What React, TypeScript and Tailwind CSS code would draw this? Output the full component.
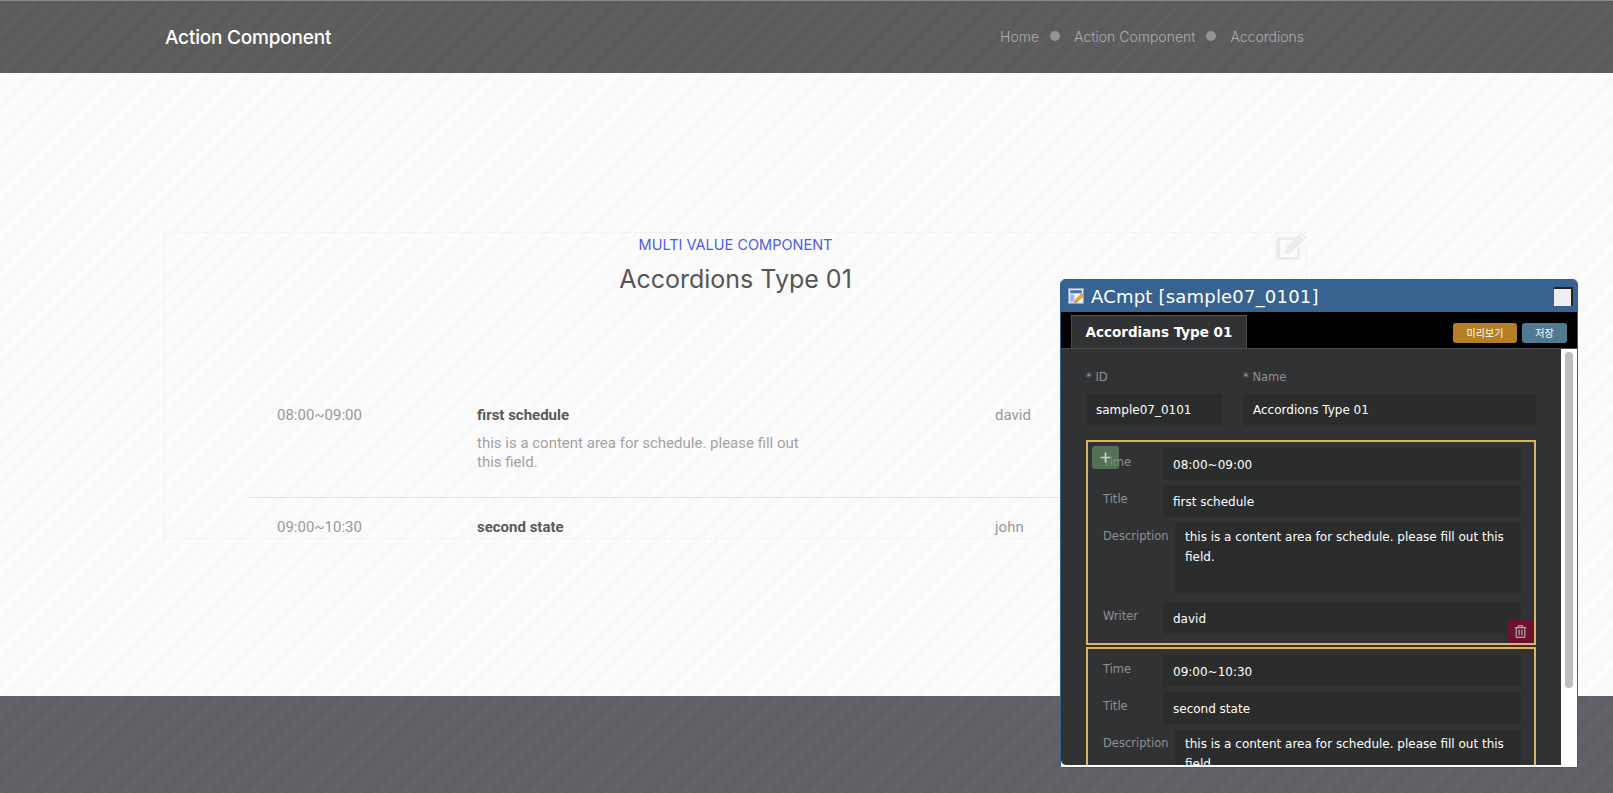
import { Plus } from "lucide-react";
import { FaRegTrashAlt } from "react-icons/fa";

const poppins = "font-['Inter','Liberation_Sans',sans-serif]";
const dialogFont = "font-['DejaVu_Sans','Noto_Sans_CJK_KR',sans-serif]";

const Field = ({ label, value }: { label: string; value: string }) => (
  <div className="flex items-start">
    <label className="w-[60px] shrink-0 box-content pt-[5px] pl-[15px] text-[11.5px] leading-[18px] text-[#8f9092]">
      {label}
    </label>
    <div className="h-8 flex-1 rounded-[2px] bg-[#2b2c2c] px-[10px] text-[12px] leading-[35px] text-white">
      {value}
    </div>
  </div>
);

const ScheduleBox = ({ time, title, writer, tools }: { time: string; title: string; writer: string; tools?: boolean }) => (
  <div className="relative flex flex-col gap-[5px] border-2 border-[#dcb463] pt-[6px] pr-[13px] pb-[9px]">
    <Field label="Time" value={time} />
    <Field label="Title" value={title} />
    <div className="flex items-start">
      <label className="w-[72px] shrink-0 box-content pt-[5px] pl-[15px] text-[11.5px] leading-[18px] text-[#8f9092]">
        Description
      </label>
      <div className="h-[72px] flex-1 rounded-[2px] bg-[#2b2c2c] px-[10px] pt-[5px] text-[12px] leading-[20px] text-white">
        this is a content area for schedule. please fill out this field.
      </div>
    </div>
    <div className="mt-[3px]">
      <Field label="Writer" value={writer} />
    </div>
    {tools && (
      <>
        <div className="absolute top-[4px] left-[4px] flex h-[23px] w-[27px] items-center justify-center rounded-[3px] bg-[#6d9a6f]/60">
          <Plus size={15} strokeWidth={2.5} className="text-[#c9cfc9]" />
        </div>
        <div className="absolute right-[1px] bottom-[0px] flex h-[23px] w-[26px] items-center justify-center rounded-[3px] bg-[#6b1230]">
          <FaRegTrashAlt size={13} className="text-[#b0a7aa]" />
        </div>
      </>
    )}
  </div>
);

const EditIcon = () => (
  <svg viewBox="0 0 30 28" className="absolute top-0 right-0 h-[28px] w-[30px]" fill="#ececec">
    <path d="M4 4h16l-3 3H5a1 1 0 0 0-1 1v15a1 1 0 0 0 1 1h15a1 1 0 0 0 1-1v-7l3-3v11a3 3 0 0 1-3 3H4a4 4 0 0 1-4-4V8a4 4 0 0 1 4-4z" />
    <path d="M10 14 23 2l5 5-13 13-6 1z" />
    <path d="M25 1l1-1 4 4-1 2z" />
  </svg>
);

const WindowIcon = () => (
  <svg viewBox="0 0 16 16" className="h-[17px] w-[17px] shrink-0">
    <rect x="0.5" y="0.5" width="14" height="14" fill="#f2f5fa" stroke="#8fa4c4" />
    <rect x="2" y="2" width="11" height="3" fill="#4b74b4" />
    <rect x="2" y="6" width="4" height="7" fill="#9db8dc" />
    <path d="M6 14 7 11 13 5l2 2-6 6z" fill="#e6a93a" stroke="#9a6a1c" strokeWidth="0.5" />
  </svg>
);

const Row = ({ time, title, writer, desc }: { time: string; title: string; writer: string; desc?: string }) => (
  <div className="flex pl-[29px] font-['Roboto',sans-serif] text-[15px]">
    <div className="w-[200px] shrink-0 leading-[22px] text-[#999999]">{time}</div>
    <div className="w-[518px] shrink-0">
      <div className="leading-[22px] font-bold text-[#5a5a5a]">{title}</div>
      {desc && <p className="mt-[8px] w-[330px] leading-[19px] text-[#a3a3a3]">{desc}</p>}
    </div>
    <div className="leading-[22px] text-[#999999]">{writer}</div>
  </div>
);

export default function App() {
  return (
    <div className={`relative flex h-[793px] flex-col overflow-hidden ${poppins}`}>
      <header className="h-[73px] shrink-0 border-t border-[#8a8a8a] bg-[repeating-linear-gradient(135deg,#5b5b5b_0,#5b5b5b_7px,#5e5e5e_7px,#5e5e5e_14px)]">
        <div className="ml-[165px] flex h-full w-[1142px] items-center justify-between pr-[3px]">
          <h1 className="pt-[2px] text-[19px] font-medium tracking-[-0.2px] text-white">Action Component</h1>
          <nav className="flex items-center pb-[2px] text-[14px] font-light text-[#adadad]">
            <span>Home</span>
            <span className="mr-[14px] ml-[11px] h-[10px] w-[10px] rounded-full bg-[#949494]" />
            <span>Action Component</span>
            <span className="mr-[14px] ml-[11px] h-[10px] w-[10px] rounded-full bg-[#949494]" />
            <span>Accordions</span>
          </nav>
        </div>
      </header>

      <main className="flex-1 bg-[repeating-linear-gradient(135deg,#fcfcfc_0,#fcfcfc_7px,#f9f9f9_7px,#f9f9f9_14px)] pt-[159px]">
        <section className="relative ml-[164px] h-[307px] w-[1143px] overflow-hidden border border-dashed border-[#f0f0f0]">
          <EditIcon />
          <div className="pt-[1px] text-center">
            <div className="text-[14.5px] leading-[22px] text-[#4f5ce0]">MULTI VALUE COMPONENT</div>
            <h2 className="mt-[6px] text-[25px] leading-[34px] font-normal text-[#555555]">Accordions Type 01</h2>
          </div>
          <div className="mx-[83px] mt-[108px]">
            <div className="border-b border-[#e2e2e2] pb-[25px]">
              <Row
                time="08:00~09:00"
                title="first schedule"
                writer="david"
                desc="this is a content area for schedule. please fill out this field."
              />
            </div>
            <div className="pt-[18px]">
              <Row time="09:00~10:30" title="second state" writer="john" />
            </div>
          </div>
        </section>
      </main>

      <footer className="h-[97px] shrink-0 bg-[repeating-linear-gradient(135deg,#5f6065_0,#5f6065_9px,#626368_9px,#626368_18px)]" />

      {/* floating editor window */}
      <div
        className={`absolute top-[279px] left-[1060px] flex h-[489px] w-[518px] flex-col overflow-hidden rounded-t-[5px] border border-[#33608f] bg-white ${dialogFont}`}
      >
        <div className="flex h-[32px] shrink-0 items-center bg-[#386391] pr-[4px] pl-[7px]">
          <WindowIcon />
          <span className="mt-[1px] ml-[6px] flex-1 text-[18px] leading-none tracking-[0.2px] text-white">ACmpt [sample07_0101]</span>
          <div className="h-[19px] w-[19px] border-t-2 border-r-2 border-[#222] bg-[#eeeeee]" />
        </div>
        <div className="flex h-[37px] shrink-0 items-end justify-between border-b border-[#4a4b4d] bg-black px-[10px]">
          <div className="flex h-[33px] w-[176px] items-center justify-center border-x border-t border-x-[#4a4b4d] border-t-[#3c6276] bg-[#313234] pt-[1px] text-[13.5px] font-bold text-white">
            Accordians Type 01
          </div>
          <div className="mb-[5px] flex gap-[5px] text-[10px] text-white">
            <button className="h-[20px] w-[64px] rounded-[3px] bg-[#b47f25]">미리보기</button>
            <button className="h-[20px] w-[45px] rounded-[3px] bg-[#4f7a92]">저장</button>
          </div>
        </div>
        <div className="flex min-h-0 flex-1 pb-[2px]">
          <div className="min-h-0 flex-1 overflow-hidden rounded-bl-[5px] bg-[#313234] px-[25px] pt-[19px]">
            <div className="flex gap-[20px]">
              <div className="w-[137px]">
                <div className="text-[11.5px] leading-[18px] text-[#8f9092]">* ID</div>
                <div className="mt-[8px] h-8 rounded-[2px] bg-[#2b2c2c] px-[10px] text-[12px] leading-[32px] text-white">sample07_0101</div>
              </div>
              <div className="flex-1">
                <div className="text-[11.5px] leading-[18px] text-[#8f9092]">* Name</div>
                <div className="mt-[8px] h-8 rounded-[2px] bg-[#2b2c2c] px-[10px] text-[12px] leading-[32px] text-white">Accordions Type 01</div>
              </div>
            </div>
            <div className="mt-[14px] flex flex-col gap-[2px]">
              <ScheduleBox time="08:00~09:00" title="first schedule" writer="david" tools />
              <ScheduleBox time="09:00~10:30" title="second state" writer="john" />
            </div>
          </div>
          <div className="w-[16px] shrink-0 bg-white pt-[3px] pl-[4px]">
            <div className="h-[336px] w-[8px] rounded-full bg-[#bdbdbd]" />
          </div>
        </div>
      </div>
    </div>
  );
}
